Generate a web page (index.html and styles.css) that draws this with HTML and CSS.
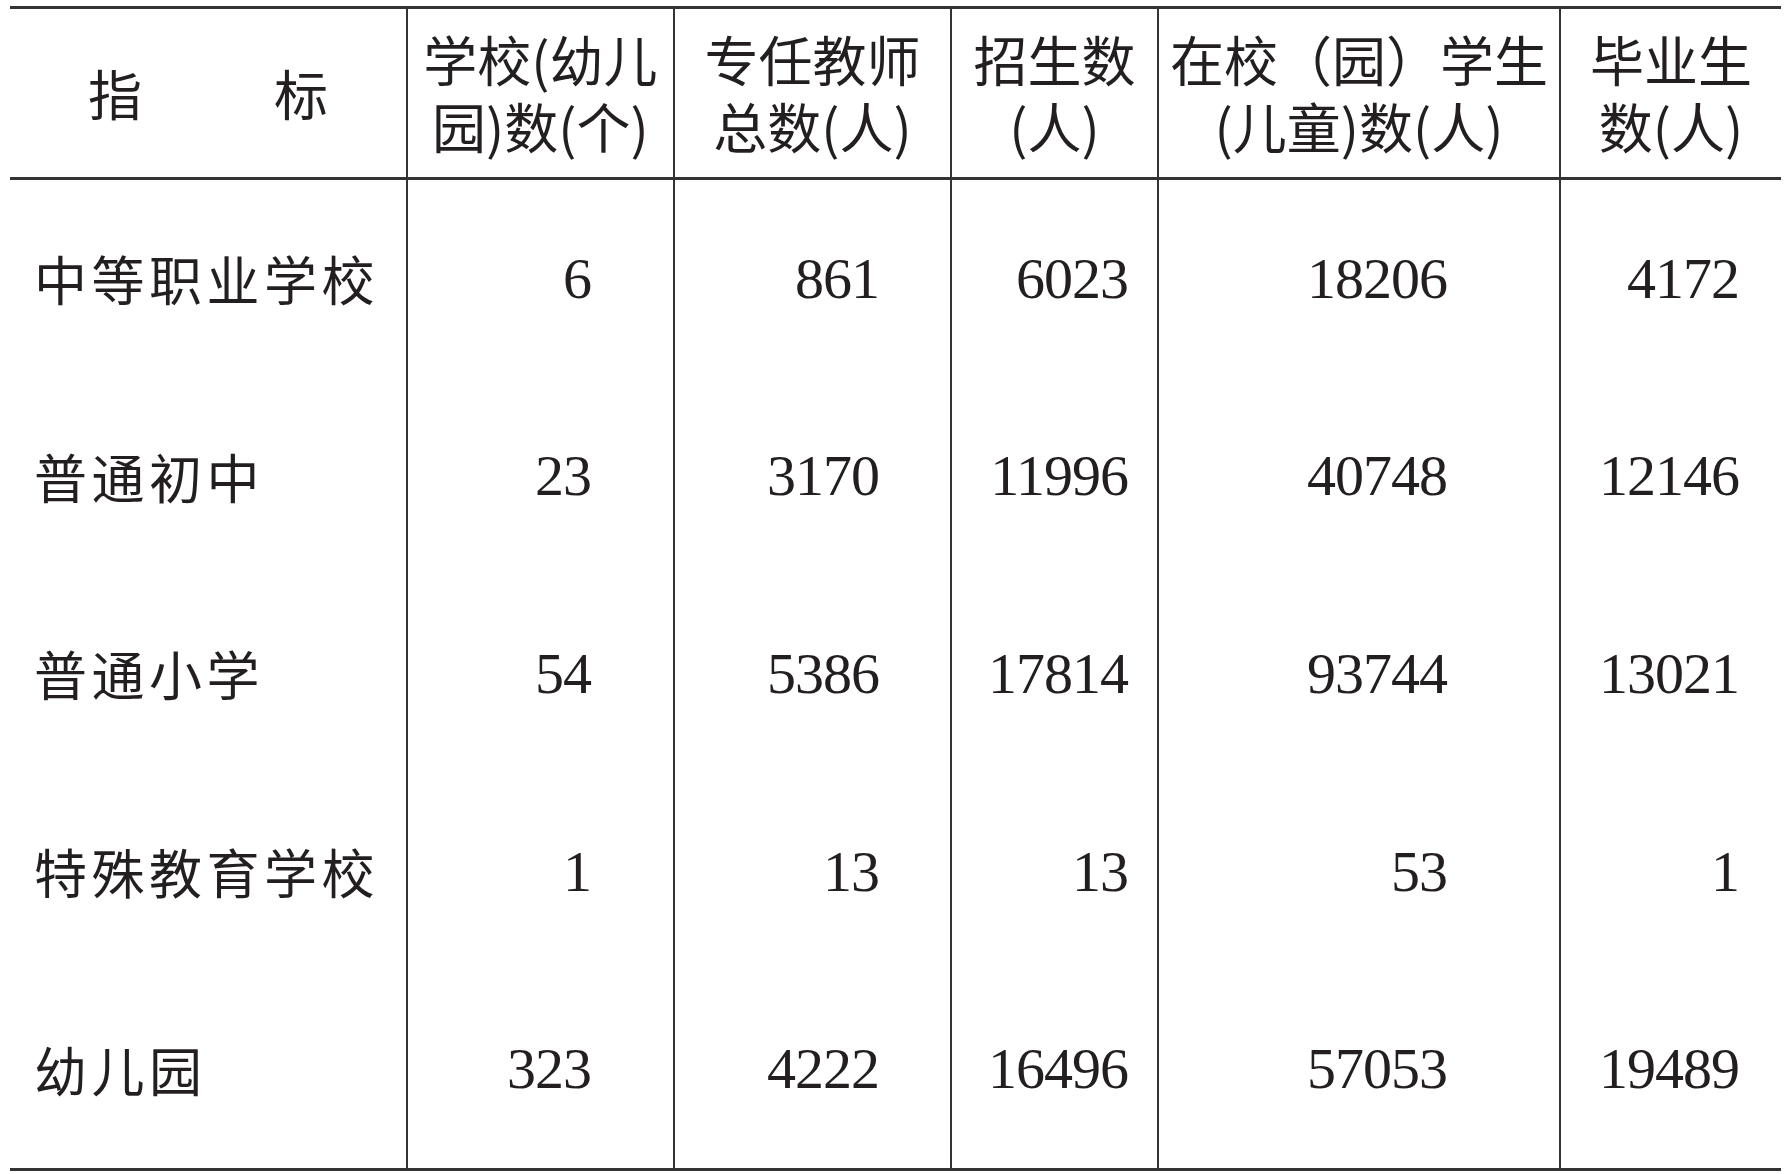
FILE: index.html
```html
<!DOCTYPE html>
<html lang="zh-CN">
<head>
<meta charset="utf-8">
<title>教育统计表</title>
<link rel="stylesheet" href="styles.css">
</head>
<body>
<table class="edu">
  <thead>
    <tr>
      <th class="head head-index"><span>指</span><span>标</span></th>
      <th class="head">学校(幼儿<br>园)数(个)</th>
      <th class="head">专任教师<br>总数(人)</th>
      <th class="head">招生数<br>(人)</th>
      <th class="head">在校（园）学生<br>(儿童)数(人)</th>
      <th class="head">毕业生<br>数(人)</th>
    </tr>
  </thead>
  <tbody>
    <tr>
      <th class="label">中等职业学校</th>
      <td class="num c1">6</td><td class="num c2">861</td><td class="num c3">6023</td><td class="num c4">18206</td><td class="num c5">4172</td>
    </tr>
    <tr>
      <th class="label">普通初中</th>
      <td class="num c1">23</td><td class="num c2">3170</td><td class="num c3">11996</td><td class="num c4">40748</td><td class="num c5">12146</td>
    </tr>
    <tr>
      <th class="label">普通小学</th>
      <td class="num c1">54</td><td class="num c2">5386</td><td class="num c3">17814</td><td class="num c4">93744</td><td class="num c5">13021</td>
    </tr>
    <tr>
      <th class="label">特殊教育学校</th>
      <td class="num c1">1</td><td class="num c2">13</td><td class="num c3">13</td><td class="num c4">53</td><td class="num c5">1</td>
    </tr>
    <tr>
      <th class="label">幼儿园</th>
      <td class="num c1">323</td><td class="num c2">4222</td><td class="num c3">16496</td><td class="num c4">57053</td><td class="num c5">19489</td>
    </tr>
  </tbody>
</table>
</body>
</html>
```

FILE: styles.css
```css
html, body {
  margin: 0;
  padding: 0;
  background: #ffffff;
}

.edu {
  display: grid;
  grid-template-columns: 396px 267px 277px 207px 402px 222px;
  grid-template-rows: 171px repeat(5, 197.6px);
  width: 1771px;
  margin: 6px 0 0 10px;
  border-top: 3px solid #333333;
  border-bottom: 3px solid #333333;
  border-collapse: separate;
  border-spacing: 0;
  color: #231f20;
}

.edu thead,
.edu tbody,
.edu tr {
  display: contents;
}

.edu th,
.edu td {
  box-sizing: border-box;
  margin: 0;
  padding: 0;
  display: flex;
  align-items: center;
  font-weight: 400;
}

.edu th + th,
.edu th + td,
.edu td + td {
  border-left: 2px solid #333333;
}

.edu .head {
  border-bottom: 3px solid #333333;
  justify-content: center;
  text-align: center;
  font-family: "Noto Sans CJK SC", "Noto Sans", sans-serif;
  font-size: 54px;
  line-height: 67px;
  padding-bottom: 2px;
}

.edu .head-index {
  gap: 132px;
}

.edu .label {
  justify-content: flex-start;
  padding-left: 24px;
  font-family: "Noto Sans CJK SC", "Noto Sans", sans-serif;
  font-size: 53px;
  letter-spacing: 4.5px;
  line-height: 1;
}

.edu .num {
  justify-content: flex-end;
  font-family: "Liberation Serif", "DejaVu Serif", serif;
  font-size: 58px;
  letter-spacing: -1px;
  line-height: 1;
}

.edu .c1 { padding-right: 82px; }
.edu .c2 { padding-right: 71px; }
.edu .c3 { padding-right: 29px; }
.edu .c4 { padding-right: 112px; }
.edu .c5 { padding-right: 42px; }
```
